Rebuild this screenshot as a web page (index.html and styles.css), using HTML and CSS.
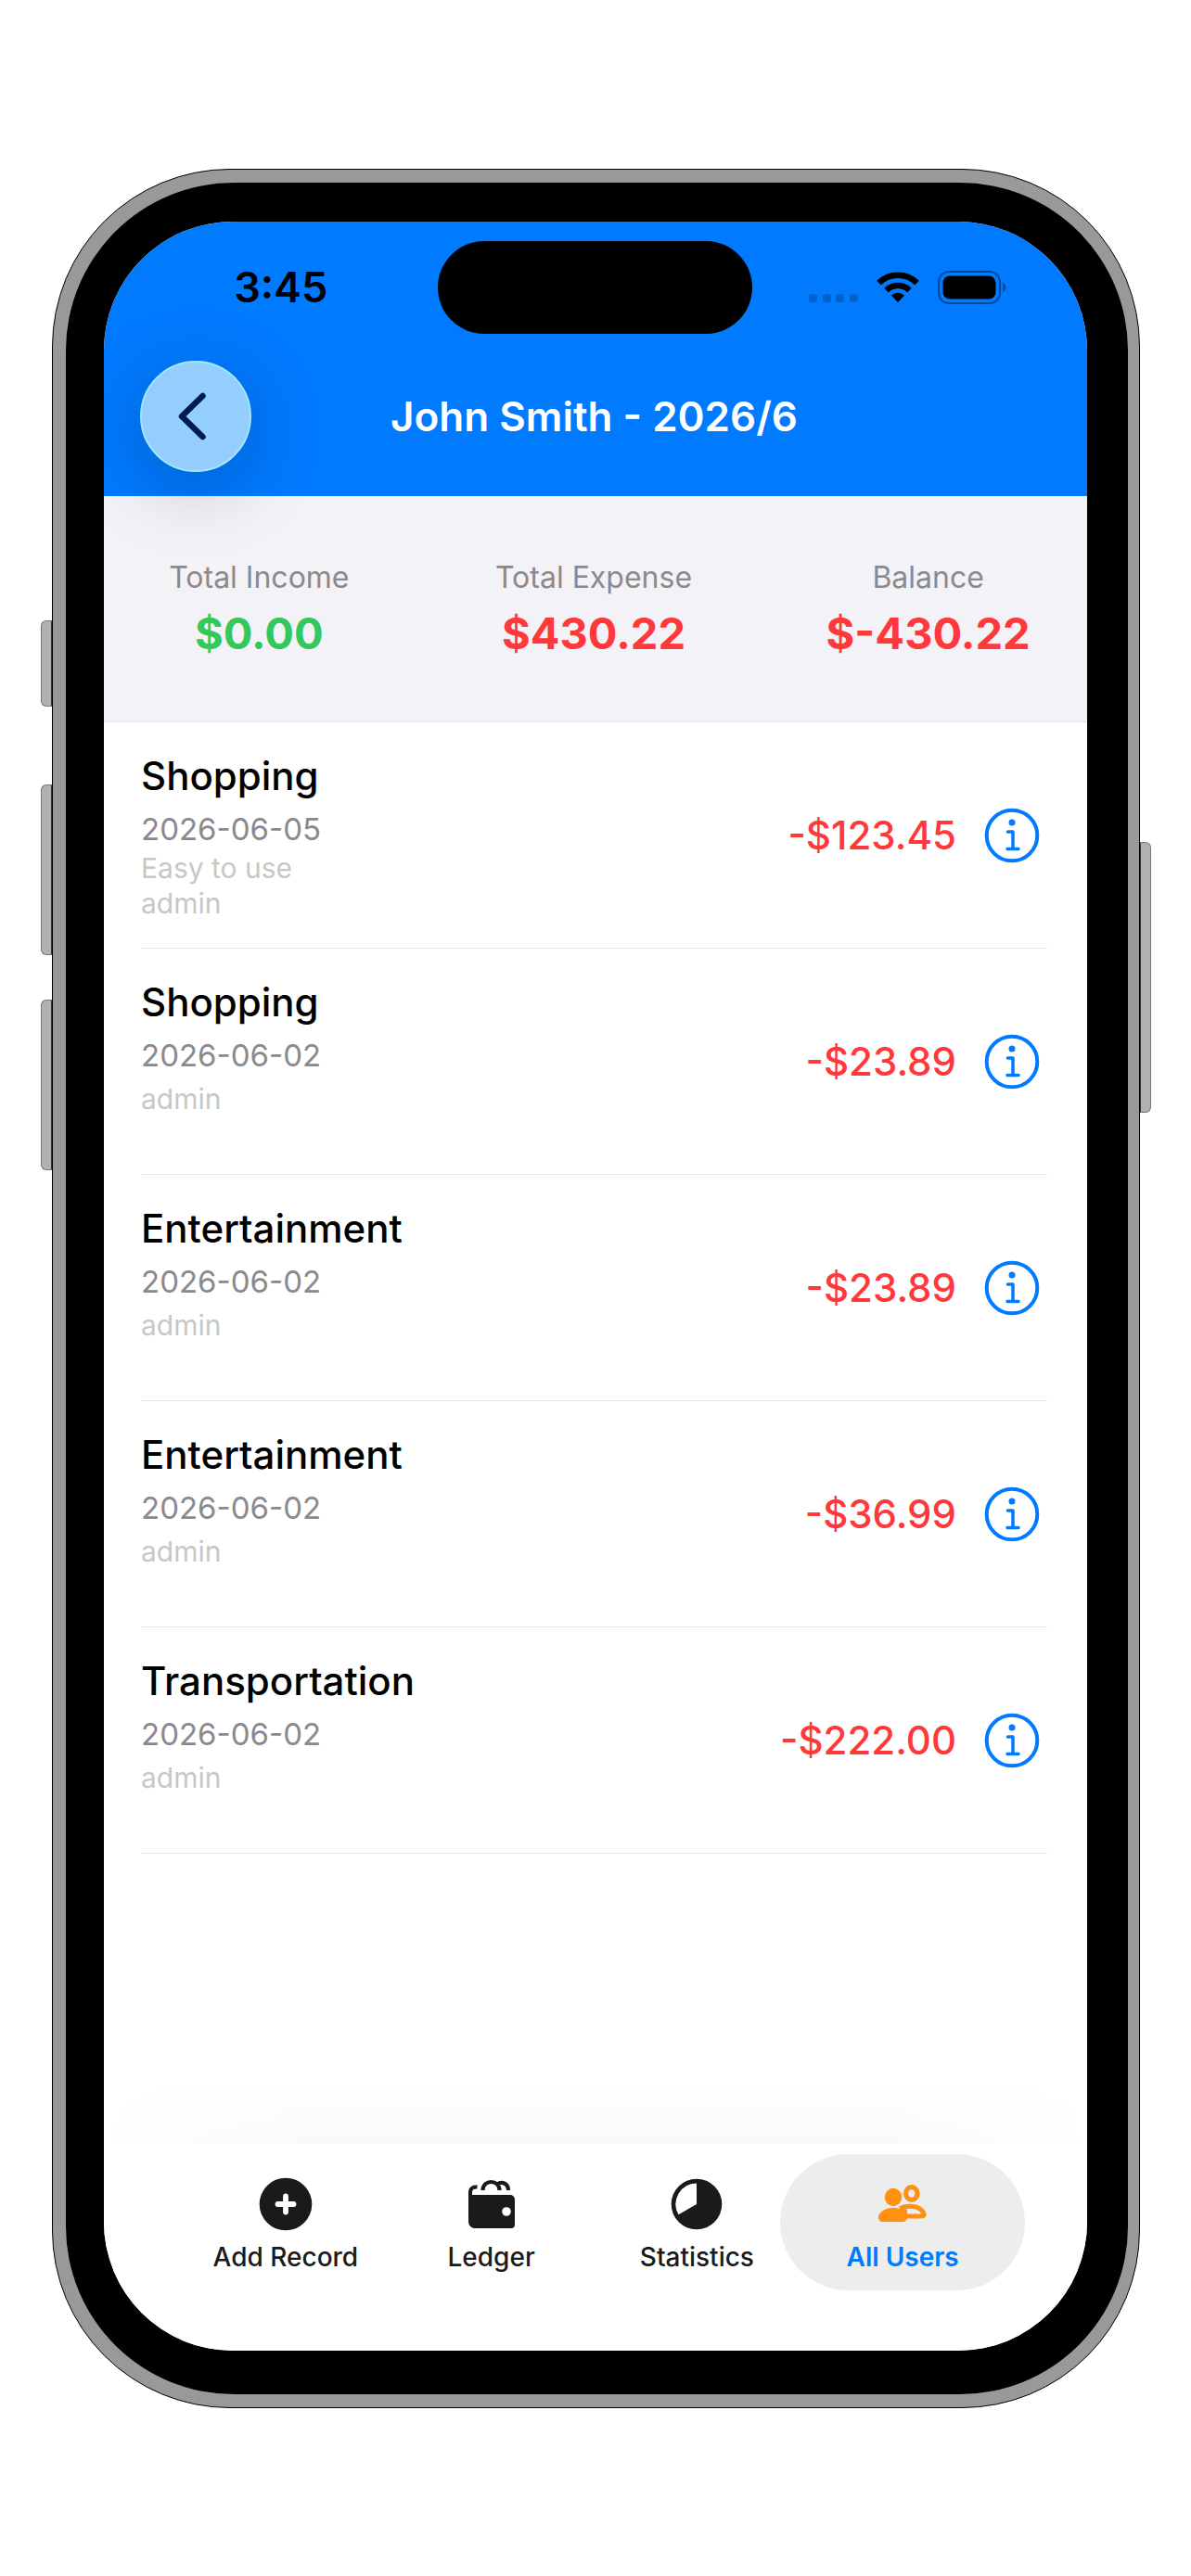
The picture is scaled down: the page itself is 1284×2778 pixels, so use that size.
FILE: index.html
```html
<!DOCTYPE html>
<html lang="en">
<head>
  <meta charset="UTF-8">
  <meta name="viewport" content="width=device-width, initial-scale=1">
  <title>John Smith - 2026/6</title>
  <link rel="stylesheet" href="styles.css">
</head>
<body>
  <!-- shared icons -->
  <svg class="defs" aria-hidden="true">
    <symbol id="info" viewBox="0 0 60 60">
      <circle cx="30" cy="30" r="27.3" fill="none" stroke="currentColor" stroke-width="4"/>
      <circle cx="30" cy="16" r="3.5" fill="currentColor"/>
      <path d="M25.500 26h5.500v18M25 44.500h12" fill="none" stroke="currentColor" stroke-width="3.500" stroke-linecap="round" stroke-linejoin="round"/>
    </symbol>
  </svg>

  <div class="phone">
    <span class="side-key key-action"></span>
    <span class="side-key key-up"></span>
    <span class="side-key key-down"></span>
    <span class="side-key key-power"></span>
    <div class="bezel">
      <div class="screen">
        <header class="top">
          <div class="status">
            <span class="time">3:45</span>
            <span class="island"></span>
            <span class="status-icons">
              <svg class="signal" viewBox="0 0 53 34" width="53" height="34">
                <g fill="#000" opacity="0.2">
                  <rect x="0" y="24" width="9" height="9" rx="3"/>
                  <rect x="15" y="24" width="9" height="9" rx="3"/>
                  <rect x="29" y="24" width="9" height="9" rx="3"/>
                  <rect x="44" y="24" width="9" height="9" rx="3"/>
                </g>
              </svg>
              <svg class="wifi" viewBox="0 0 46 34" width="46" height="34">
                <path d="M2.500 12a29.500 29.500 0 0 1 41 0M10.500 20a18 18 0 0 1 25 0" fill="none" stroke="#000" stroke-width="6.500"/>
                <path d="M23 33l-7-7.500a10.300 10.300 0 0 1 14 0z" fill="#000"/>
              </svg>
              <svg class="battery" viewBox="0 0 74 36" width="74" height="36">
                <rect x="1" y="1" width="66" height="34" rx="11" fill="none" stroke="#000" stroke-width="2" opacity="0.4"/>
                <rect x="5.500" y="5.500" width="57" height="25" rx="7.500" fill="#000"/>
                <path d="M70 12.500c4.500 2 4.500 9 0 11z" fill="#000" opacity="0.4"/>
              </svg>
            </span>
          </div>
          <div class="nav">
            <button class="back" type="button" aria-label="Back">
              <svg viewBox="0 0 30 52" width="30" height="52">
                <path d="M26.500 4L4 26l22.500 22" fill="none" stroke="#001e4d" stroke-width="6.500" stroke-linecap="round" stroke-linejoin="round"/>
              </svg>
            </button>
            <h1>John Smith - 2026/6</h1>
          </div>
        </header>

        <section class="summary">
          <div>
            <p class="label">Total Income</p>
            <p class="value income">$0.00</p>
          </div>
          <div>
            <p class="label">Total Expense</p>
            <p class="value expense">$430.22</p>
          </div>
          <div>
            <p class="label">Balance</p>
            <p class="value expense">$-430.22</p>
          </div>
        </section>

        <ul class="records">
          <li class="record">
            <div class="detail">
              <h2>Shopping</h2>
              <p class="date">2026-06-05</p>
              <div class="meta"><p>Easy to use</p><p>admin</p></div>
            </div>
            <span class="amount">-$123.45</span>
            <button class="info" type="button" aria-label="Details"><svg><use href="#info"/></svg></button>
          </li>
          <li class="record">
            <div class="detail">
              <h2>Shopping</h2>
              <p class="date">2026-06-02</p>
              <div class="meta"><p>admin</p></div>
            </div>
            <span class="amount">-$23.89</span>
            <button class="info" type="button" aria-label="Details"><svg><use href="#info"/></svg></button>
          </li>
          <li class="record">
            <div class="detail">
              <h2>Entertainment</h2>
              <p class="date">2026-06-02</p>
              <div class="meta"><p>admin</p></div>
            </div>
            <span class="amount">-$23.89</span>
            <button class="info" type="button" aria-label="Details"><svg><use href="#info"/></svg></button>
          </li>
          <li class="record">
            <div class="detail">
              <h2>Entertainment</h2>
              <p class="date">2026-06-02</p>
              <div class="meta"><p>admin</p></div>
            </div>
            <span class="amount">-$36.99</span>
            <button class="info" type="button" aria-label="Details"><svg><use href="#info"/></svg></button>
          </li>
          <li class="record">
            <div class="detail">
              <h2>Transportation</h2>
              <p class="date">2026-06-02</p>
              <div class="meta"><p>admin</p></div>
            </div>
            <span class="amount">-$222.00</span>
            <button class="info" type="button" aria-label="Details"><svg><use href="#info"/></svg></button>
          </li>
        </ul>

        <nav class="tabs">
          <button class="tab" type="button">
            <svg viewBox="0 0 58 58">
              <circle cx="29" cy="29" r="28.300" fill="#1a1a1a"/>
              <path d="M29 20.500v17M20.500 29h17" stroke="#fff" stroke-width="5.800" stroke-linecap="round"/>
            </svg>
            <span>Add Record</span>
          </button>
          <button class="tab" type="button">
            <svg viewBox="0 0 58 58">
              <path d="M13.500 10.500C9 10 6 12 6 16v30" fill="none" stroke="#1a1a1a" stroke-width="4"/>
              <path d="M4 15c0 3 1 4 4 4h41a5 5 0 0 1 5 5v27a4 4 0 0 1-4 4H11a7 7 0 0 1-7-7z" fill="#1a1a1a"/>
              <path d="M19.500 14c0-12 18-12 18 0M35 7.500c6-4 12 0 12 6.500" fill="none" stroke="#1a1a1a" stroke-width="4.200"/>
              <circle cx="45" cy="37" r="4.800" fill="#fff"/>
            </svg>
            <span>Ledger</span>
          </button>
          <button class="tab" type="button">
            <svg viewBox="0 0 58 58">
              <circle cx="29" cy="29" r="27.300" fill="#1a1a1a"/>
              <path d="M29 29V6.500A22.500 22.500 0 0 0 9.500 40.300z" fill="#fff"/>
            </svg>
            <span>Statistics</span>
          </button>
          <button class="tab active" type="button">
            <svg viewBox="0 0 58 58" fill="#ff9010">
              <ellipse cx="19" cy="21.500" rx="9.200" ry="9.700"/>
              <path d="M8 48c-3 0-5-2-5-5 0-5 7-10 16-10 3 0 6 .6 8.500 1.600h6.500v9c0 3-2 4.400-4.500 4.400z"/>
              <ellipse cx="38.800" cy="17.500" rx="6.200" ry="6.900" fill="none" stroke="#ff9010" stroke-width="5.200"/>
              <path d="M26 34c7-4 21-4 25.500 4 1.500 3 0 4-2 4H31" fill="none" stroke="#ff9010" stroke-width="5"/>
            </svg>
            <span>All Users</span>
          </button>
        </nav>
      </div>
    </div>
  </div>
</body>
</html>
```
FILE: styles.css
```css
* {
  box-sizing: border-box;
}
body {
  display: flex;
  min-height: 100vh;
  margin: 0;
  padding: 182px 55px 181px 56px;
  background-color: #fff;
  font-family: Inter, "Liberation Sans", sans-serif;
  color: #000;
}
h1, h2, p, ul {
  margin: 0;
  padding: 0;
}
button {
  padding: 0;
  border: none;
  background: none;
  font-family: inherit;
  cursor: pointer;
}
svg {
  display: block;
}
.defs {
  position: absolute;
  width: 0;
  height: 0;
}

/* phone body */
.phone {
  position: relative;
  display: flex;
  flex: 1;
  padding: 14px 12px 14px 14px;
  border: 1px solid #000;
  border-radius: 192px;
  background-color: #999;
}
.bezel {
  display: flex;
  flex: 1;
  padding: 42px 44px 47px 41px;
  border-radius: 181px;
  background-color: #000;
}
.side-key {
  position: absolute;
  left: -13px;
  width: 12px;
  height: 184px;
  border: 1px solid #777;
  border-right-color: #333;
  border-radius: 6px 0 0 6px;
  background-color: #b1b1b1;
}
.key-action {
  top: 486px;
  height: 93px;
}
.key-up {
  top: 663px;
}
.key-down {
  top: 895px;
}
.key-power {
  top: 725px;
  left: auto;
  right: -13px;
  height: 292px;
  border-color: #777 #777 #777 #333;
  border-radius: 0 6px 6px 0;
}
.screen {
  display: flex;
  flex: 1;
  flex-direction: column;
  overflow: hidden;
  border-radius: 139px;
  background-color: #fff;
}

/* header */
.top {
  position: relative;
  background-color: #007aff;
}
.status {
  display: grid;
  grid-template-columns: 1fr 339px 1fr;
  align-items: center;
  height: 142px;
  padding-right: 2px;
}
.time {
  padding-left: 22px;
  font-size: 45px;
  font-weight: 600;
  line-height: 54px;
  text-align: center;
}
.island {
  height: 100px;
  border-radius: 50px;
  background-color: #000;
}
.status-icons {
  display: flex;
  align-items: center;
  justify-content: flex-end;
  gap: 20px;
  padding-right: 85px;
}
.nav {
  display: grid;
  grid-template-columns: 120px 1fr 120px;
  align-items: center;
  padding: 8px 42px 26px 39px;
}
.back {
  display: flex;
  align-items: center;
  justify-content: center;
  height: 120px;
  padding-right: 8px;
  border: 2px solid #a0e6ff;
  border-radius: 60px;
  background-color: #94ceff;
  box-shadow: 0 16px 80px rgba(0, 0, 0, 0.22);
}
h1 {
  font-size: 44px;
  font-weight: 600;
  line-height: 54px;
  text-align: center;
  color: #fff;
}

/* totals */
.summary {
  display: grid;
  grid-template-columns: repeat(3, 1fr);
  gap: 102px;
  padding: 68px 42px 67px 38px;
  border-bottom: 1px solid #e5e5ea;
  background-color: #f2f2f7;
  text-align: center;
  white-space: nowrap;
}
.label {
  font-size: 32px;
  line-height: 40px;
  color: #8a8a8e;
}
.value {
  margin-top: 12px;
  font-size: 47px;
  font-weight: 700;
  line-height: 56px;
}
.summary div {
  display: flex;
  flex-direction: column;
  align-items: center;
}
.income {
  color: #34c759;
}
.expense {
  color: #ff383c;
}

/* record list */
.records {
  flex: 1;
  padding: 0 43px 0 40px;
  list-style: none;
}
.record {
  display: flex;
  align-items: center;
  min-height: 244px;
  padding-right: 8px;
  border-bottom: 1px solid #e8e8e8;
}
.detail {
  flex: 1;
  align-self: flex-start;
  padding-top: 31px;
}
h2 {
  font-size: 42px;
  font-weight: 500;
  line-height: 54px;
}
.date {
  margin-top: 10px;
  font-size: 33px;
  line-height: 40px;
  color: #8a8a8e;
}
.meta {
  display: flex;
  flex-direction: column;
  justify-content: center;
  min-height: 48px;
  margin-top: 3px;
  font-size: 30px;
  line-height: 38px;
  color: #c7c7c7;
}
.amount {
  font-size: 42px;
  font-weight: 500;
  line-height: 54px;
  color: #ff383c;
}
.info {
  width: 60px;
  height: 60px;
  margin-left: 30px;
  color: #007aff;
}
.info svg {
  width: 60px;
  height: 60px;
}

/* tab bar */
.tabs {
  position: relative;
  display: flex;
  padding: 11px 88px 65px 85px;
  background-color: #fff;
}
.tabs::before {
  content: "";
  position: absolute;
  right: 0;
  bottom: 100%;
  left: 0;
  height: 64px;
  background:
    linear-gradient(to right, #fff, transparent 22%, transparent 78%, #fff),
    linear-gradient(to top, #f9f9f9, #fff);
}
.tab {
  position: relative;
  display: flex;
  flex: 1;
  flex-direction: column;
  align-items: center;
  height: 147px;
  padding-top: 25px;
  font-size: 28px;
  font-weight: 500;
  line-height: 32px;
  color: #1a1a1a;
  white-space: nowrap;
}
.tab svg {
  position: relative;
  width: 58px;
  height: 58px;
}
.tab span {
  position: relative;
  margin-top: 12px;
}
.active {
  font-weight: 600;
  color: #007aff;
}
/* the highlight is wider than its tab */
.active::before {
  content: "";
  position: absolute;
  inset: 0 -21px;
  border-radius: 74px;
  background-color: #ededed;
}
```
